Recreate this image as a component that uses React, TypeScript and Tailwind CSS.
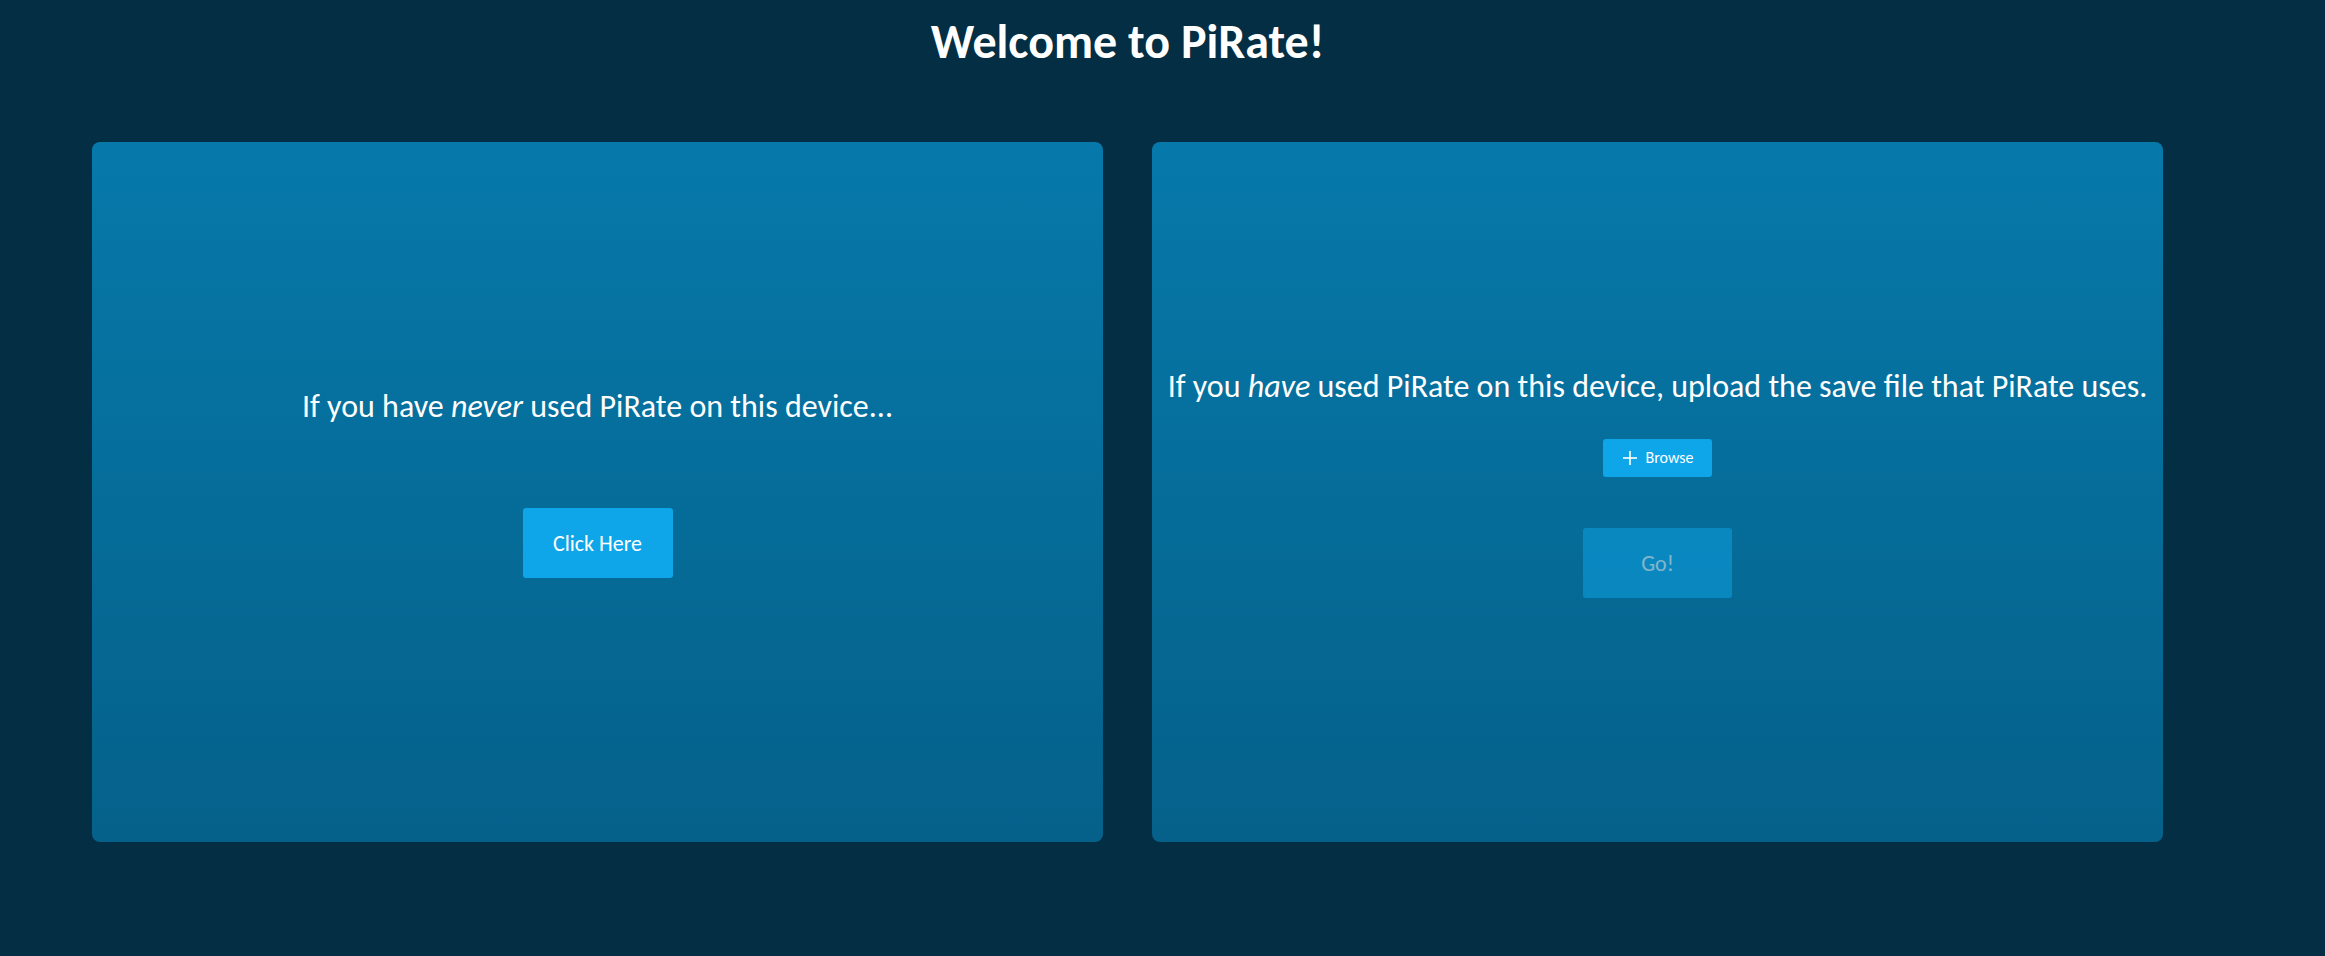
export default function App() {
  return (
    <div className="min-h-screen bg-[#032e43] text-white font-['Carlito','Lato',sans-serif]">
      <div className="ml-[92px] w-[2071px]">
        {/* Title */}
        <h1 className="pt-[13px] text-center text-[48px] font-bold leading-[58px]">Welcome to PiRate!</h1>

        {/* Choice cards */}
        <div className="mt-[71px] grid grid-cols-2 gap-[49px]">
          <div className="flex h-[700px] flex-col items-center justify-center rounded-lg bg-gradient-to-b from-[#0679aa] to-[#05618a] pb-5">
            <p className="text-[32px] leading-[42px]">
              If you have <em>never</em> used PiRate on this device...
            </p>
            <button className="mt-[80px] h-[70px] w-[150px] rounded-[3px] bg-[#0ea5e9] text-[22px]">Click Here</button>
          </div>

          <div className="flex h-[700px] flex-col items-center justify-center rounded-lg bg-gradient-to-b from-[#0679aa] to-[#05618a] pb-5">
            <p className="text-[32px] leading-[42px]">
              If you <em>have</em> used PiRate on this device, upload the save file that PiRate uses.
            </p>
            <button className="mt-[31px] flex h-[38px] w-[109px] items-center justify-center gap-[8px] rounded-[3px] bg-[#0ea5e9] text-[16px]">
              <svg width="16" height="16" viewBox="0 0 16 16" fill="none" stroke="currentColor" strokeWidth="1.6">
                <line x1="8" y1="1" x2="8" y2="15" />
                <line x1="1" y1="8" x2="15" y2="8" />
              </svg>
              Browse
            </button>
            <button disabled className="mt-[51px] h-[70px] w-[149px] rounded-[3px] bg-[#0ea5e9] text-[22px] opacity-50">Go!</button>
          </div>
        </div>
      </div>
    </div>
  )
}
